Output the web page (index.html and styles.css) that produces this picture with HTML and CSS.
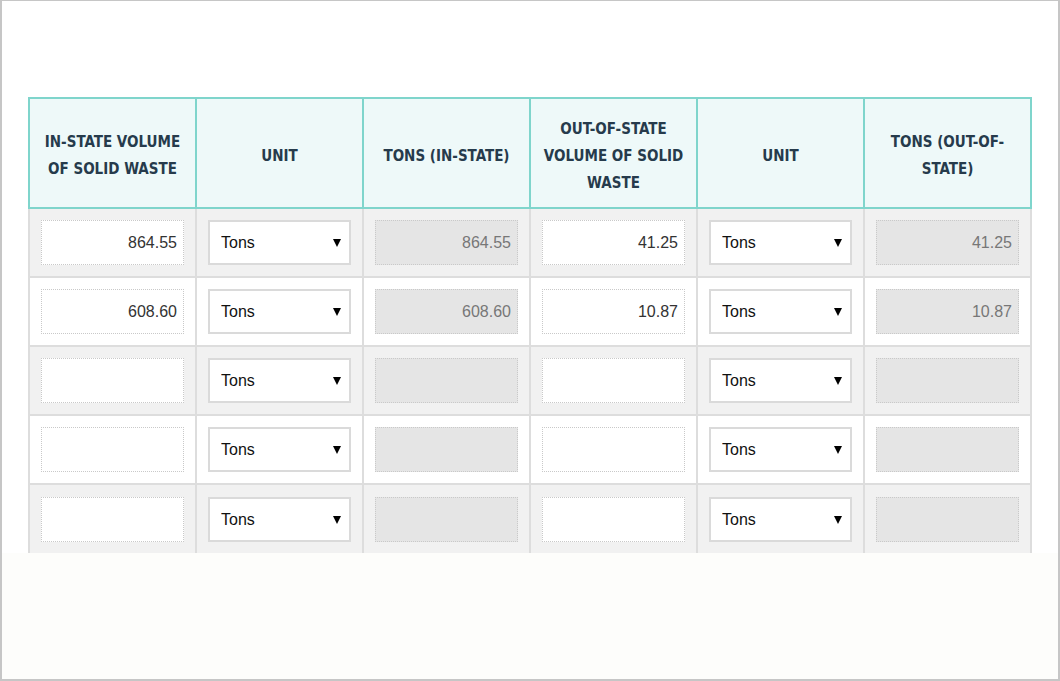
FILE: index.html
```html
<!DOCTYPE html>
<html>
<head>
<meta charset="utf-8">
<link rel="stylesheet" href="styles.css">
</head>
<body>
<div class="frame">
  <div class="panel">
    <table class="grid">
      <thead>
        <tr>
          <th>IN-STATE VOLUME<br>OF SOLID WASTE</th>
          <th>UNIT</th>
          <th>TONS (IN-STATE)</th>
          <th>OUT-OF-STATE<br>VOLUME OF SOLID<br>WASTE</th>
          <th>UNIT</th>
          <th>TONS (OUT-OF-<br>STATE)</th>
        </tr>
      </thead>
      <tbody>
        <tr class="odd">
          <td><input class="num" type="text" value="864.55"></td>
          <td><select class="unit"><option>Tons</option></select></td>
          <td><input class="num ro" type="text" value="864.55" readonly></td>
          <td><input class="num" type="text" value="41.25"></td>
          <td><select class="unit"><option>Tons</option></select></td>
          <td><input class="num ro" type="text" value="41.25" readonly></td>
        </tr>
        <tr>
          <td><input class="num" type="text" value="608.60"></td>
          <td><select class="unit"><option>Tons</option></select></td>
          <td><input class="num ro" type="text" value="608.60" readonly></td>
          <td><input class="num" type="text" value="10.87"></td>
          <td><select class="unit"><option>Tons</option></select></td>
          <td><input class="num ro" type="text" value="10.87" readonly></td>
        </tr>
        <tr class="odd">
          <td><input class="num" type="text" value=""></td>
          <td><select class="unit"><option>Tons</option></select></td>
          <td><input class="num ro" type="text" value="" readonly></td>
          <td><input class="num" type="text" value=""></td>
          <td><select class="unit"><option>Tons</option></select></td>
          <td><input class="num ro" type="text" value="" readonly></td>
        </tr>
        <tr>
          <td><input class="num" type="text" value=""></td>
          <td><select class="unit"><option>Tons</option></select></td>
          <td><input class="num ro" type="text" value="" readonly></td>
          <td><input class="num" type="text" value=""></td>
          <td><select class="unit"><option>Tons</option></select></td>
          <td><input class="num ro" type="text" value="" readonly></td>
        </tr>
        <tr class="odd last">
          <td><input class="num" type="text" value=""></td>
          <td><select class="unit"><option>Tons</option></select></td>
          <td><input class="num ro" type="text" value="" readonly></td>
          <td><input class="num" type="text" value=""></td>
          <td><select class="unit"><option>Tons</option></select></td>
          <td><input class="num ro" type="text" value="" readonly></td>
        </tr>
      </tbody>
    </table>
  </div>
</div>
</body>
</html>
```
FILE: styles.css
```css
html, body {
  margin: 0;
  padding: 0;
}
body {
  width: 1060px;
  height: 681px;
  overflow: hidden;
  font-family: "Liberation Sans", Arial, sans-serif;
}
.frame {
  box-sizing: border-box;
  width: 1060px;
  height: 681px;
  border: 1px solid #c6c6c6;
  border-left-width: 2px;
  border-bottom-width: 2px;
  border-right-width: 2px;
  background: #fdfdfb;
}
.panel {
  background: #ffffff;
  padding: 96px 0 0 26px;
}
.grid {
  border-collapse: separate;
  border-spacing: 0;
  table-layout: fixed;
  width: 1004px;
}
.grid th {
  width: 167px;
  height: 112px;
  padding: 6px 10px 0;
  box-sizing: border-box;
  background: #eef9f9;
  border-top: 2px solid #7fd5cc;
  border-right: 2px solid #7fd5cc;
  border-bottom: 2px solid #7fd5cc;
  color: #263b4c;
  font-family: "Liberation Sans Narrow", "DejaVu Sans Condensed", sans-serif;
  font-weight: bold;
  font-size: 15px;
  line-height: 27px;
  text-align: center;
  vertical-align: middle;
}
.grid th:first-child {
  width: 169px;
  border-left: 2px solid #7fd5cc;
}
.grid td {
  height: 69px;
  padding: 0 11px;
  box-sizing: border-box;
  border-right: 2px solid #dddddd;
  border-bottom: 2px solid #dddddd;
  background: #ffffff;
  vertical-align: middle;
}
.grid td:first-child {
  border-left: 2px solid #dddddd;
}
.grid tr.odd td {
  background: #f1f1f1;
}
.grid tr.last td {
  border-bottom: 0;
  height: 68px;
}
.num {
  display: block;
  box-sizing: border-box;
  width: 143px;
  height: 45px;
  margin: 0;
  padding: 0 6px;
  border: 1px dotted #c9c9c9;
  background: #ffffff;
  color: #333333;
  font-family: "Liberation Sans", Arial, sans-serif;
  font-size: 16px;
  text-align: right;
  outline: none;
}
.num.ro {
  background: #e5e5e5;
  color: #777777;
}
.unit {
  display: block;
  box-sizing: border-box;
  width: 143px;
  height: 45px;
  margin: 0;
  padding: 0 0 0 11px;
  border: 2px solid #dadada;
  border-radius: 0;
  background-color: #ffffff;
  background-image: url("data:image/svg+xml;utf8,<svg xmlns='http://www.w3.org/2000/svg' width='8' height='9'><path d='M0 1 H8 L4 9 Z' fill='%23000'/></svg>");
  background-repeat: no-repeat;
  background-position: 123px 16px;
  -webkit-appearance: none;
  appearance: none;
  color: #111111;
  font-family: "Liberation Sans", Arial, sans-serif;
  font-size: 16px;
}
```
